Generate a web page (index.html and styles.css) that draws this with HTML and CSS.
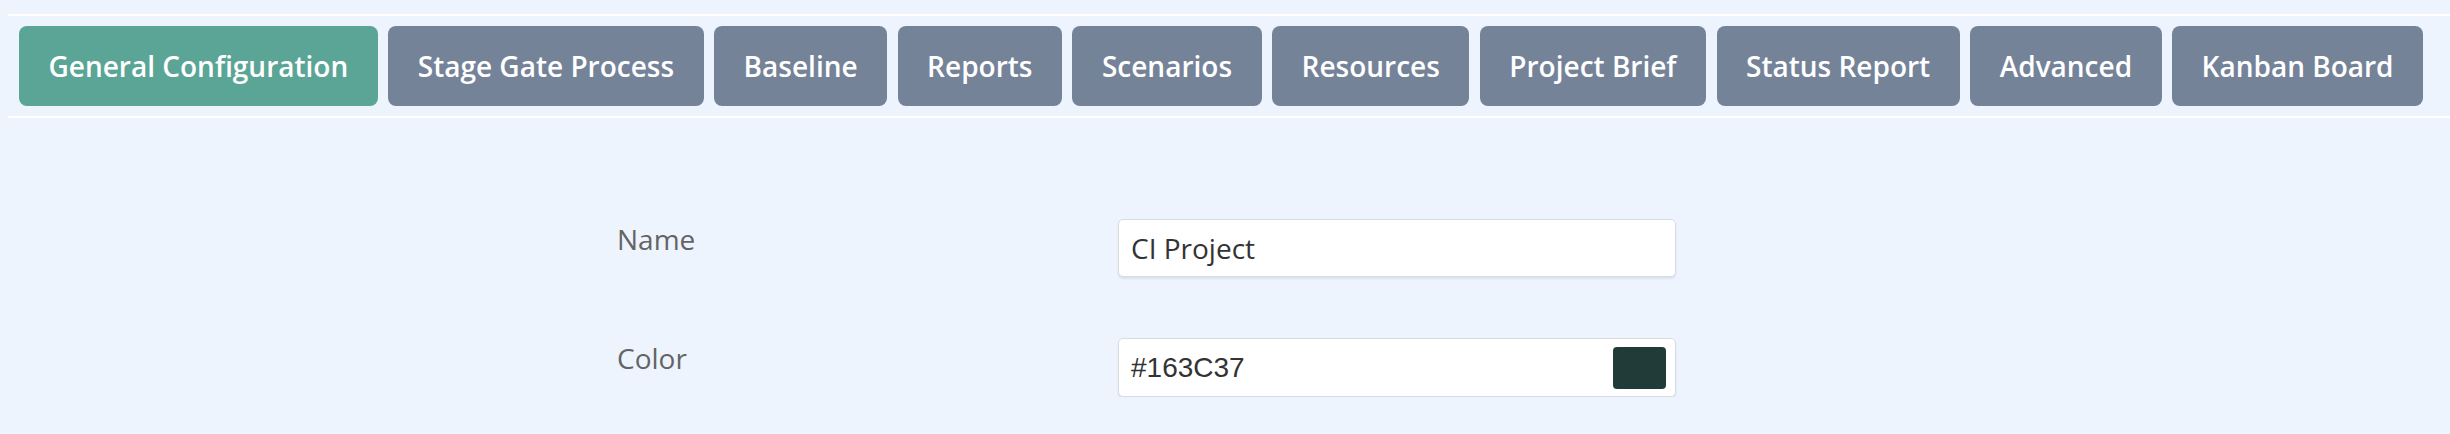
FILE: index.html
```html
<!DOCTYPE html>
<html lang="en">
<head>
<meta charset="utf-8">
<title>Project Configuration</title>
<link rel="stylesheet" href="styles.css">
</head>
<body>
<nav class="tabbar">
  <a class="tab tab-active">General Configuration</a>
  <a class="tab">Stage Gate Process</a>
  <a class="tab">Baseline</a>
  <a class="tab">Reports</a>
  <a class="tab">Scenarios</a>
  <a class="tab">Resources</a>
  <a class="tab">Project Brief</a>
  <a class="tab">Status Report</a>
  <a class="tab">Advanced</a>
  <a class="tab">Kanban Board</a>
</nav>
<form class="form">
  <div class="row">
    <label class="label">Name</label>
    <div class="field"><span class="field-text">CI Project</span></div>
  </div>
  <div class="row">
    <label class="label">Color</label>
    <div class="field field-color"><span class="field-text mono">#163C37</span><span class="swatch"></span></div>
  </div>
</form>
</body>
</html>
```
FILE: styles.css
```css
html, body {
  margin: 0;
  padding: 0;
  background: #eef4fe;
  font-family: "Open Sans", "Noto Sans", sans-serif;
}

.tabbar {
  display: flex;
  gap: 10.5px;
  margin: 14px 0 0 8px;
  padding: 10px 0 10px 11px;
  border-top: 2px solid #ffffff;
  border-bottom: 2px solid #ffffff;
}

.tab {
  display: flex;
  align-items: center;
  height: 80px;
  padding: 0 29.5px;
  border-radius: 8px;
  background: #758399;
  color: #ffffff;
  font-size: 28px;
  font-weight: 600;
  white-space: nowrap;
  box-sizing: border-box;
}

.tab-active {
  background: #5ba597;
}

.form {
  margin-top: 101px;
  padding-left: 617px;
  display: flex;
  flex-direction: column;
  gap: 61px;
}

.row {
  display: grid;
  grid-template-columns: 501px 558px;
  align-items: start;
}

.label {
  font-size: 28px;
  line-height: 40px;
  color: #646464;
}

.field {
  box-sizing: border-box;
  height: 58px;
  display: flex;
  align-items: center;
  justify-content: space-between;
  padding: 0 9px 0 12px;
  background: #ffffff;
  border: 1px solid #d8dce1;
  border-radius: 5px;
  box-shadow: 0 2px 2px rgba(0, 0, 0, 0.08);
}

.field-color {
  height: 59px;
}

.field-text {
  font-size: 28px;
  color: #333333;
}

.mono {
  font-family: "Liberation Sans", Arial, sans-serif;
}

.swatch {
  width: 53px;
  height: 42px;
  border-radius: 4px;
  background: #213c38;
}
```
